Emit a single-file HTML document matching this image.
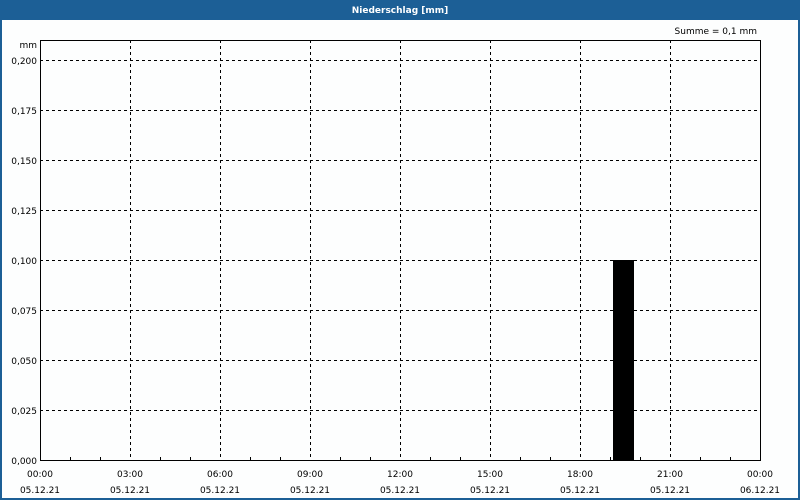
<!DOCTYPE html>
<html><head><meta charset="utf-8"><style>
html,body{margin:0;padding:0;background:#fff;}
svg{display:block;}
text{font-family:"DejaVu Sans","Liberation Sans",sans-serif;font-size:9px;fill:#000;}
</style></head><body>
<svg width="800" height="500" xmlns="http://www.w3.org/2000/svg">
<rect x="0" y="0" width="800" height="500" fill="#fdfefe"/>
<rect x="0" y="0" width="800" height="20" fill="#1c5f96"/>
<rect x="0" y="0" width="2" height="500" fill="#1c5f96"/>
<rect x="798" y="0" width="2" height="500" fill="#1c5f96"/>
<rect x="0" y="498" width="800" height="2" fill="#1c5f96"/>
<text x="400" y="13" text-anchor="middle" style="fill:#fff;font-weight:bold;font-size:9px">Niederschlag [mm]</text>
<text x="757" y="34" text-anchor="end">Summe = 0,1 mm</text>
<text x="37" y="48" text-anchor="end">mm</text>
<g stroke="#000" stroke-width="1" stroke-dasharray="3,3" fill="none">
<path d="M40 60.5H760M40 110.5H760M40 160.5H760M40 210.5H760M40 260.5H760M40 310.5H760M40 360.5H760M40 410.5H760"/>
<path d="M130.5 40V460M220.5 40V460M310.5 40V460M400.5 40V460M490.5 40V460M580.5 40V460M670.5 40V460"/>
</g>
<rect x="613" y="260" width="21" height="200" fill="#000"/>
<path d="M40.5 40.5H760.5V460.5H40.5Z" stroke="#000" fill="none"/>
<path stroke="#000" d="M70.5 457V461M100.5 457V461M160.5 457V461M190.5 457V461M250.5 457V461M280.5 457V461M340.5 457V461M370.5 457V461M430.5 457V461M460.5 457V461M520.5 457V461M550.5 457V461M610.5 457V461M640.5 457V461M700.5 457V461M730.5 457V461"/>
<g text-anchor="end">
<text x="37" y="64">0,200</text><text x="37" y="114">0,175</text><text x="37" y="164">0,150</text><text x="37" y="214">0,125</text><text x="37" y="264">0,100</text><text x="37" y="314">0,075</text><text x="37" y="364">0,050</text><text x="37" y="414">0,025</text><text x="37" y="464">0,000</text>
</g>
<g text-anchor="middle">
<text x="40" y="477">00:00</text><text x="130" y="477">03:00</text><text x="220" y="477">06:00</text><text x="310" y="477">09:00</text><text x="400" y="477">12:00</text><text x="490" y="477">15:00</text><text x="580" y="477">18:00</text><text x="670" y="477">21:00</text><text x="760" y="477">00:00</text>
<text x="40" y="493">05.12.21</text><text x="130" y="493">05.12.21</text><text x="220" y="493">05.12.21</text><text x="310" y="493">05.12.21</text><text x="400" y="493">05.12.21</text><text x="490" y="493">05.12.21</text><text x="580" y="493">05.12.21</text><text x="670" y="493">05.12.21</text><text x="760" y="493">06.12.21</text>
</g>
</svg>
</body></html>
